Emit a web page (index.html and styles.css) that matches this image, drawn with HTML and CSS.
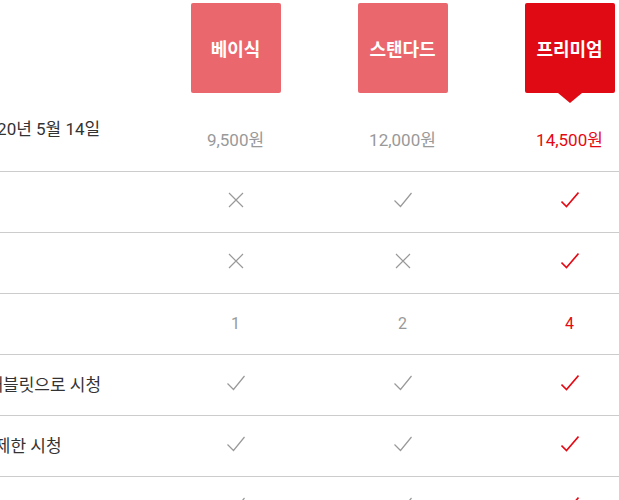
FILE: index.html
```html
<!DOCTYPE html>
<html lang="ko">
<head>
<meta charset="utf-8">
<title>요금제</title>
<link rel="stylesheet" href="styles.css">
</head>
<body>
<div class="plans">
  <div class="row head">
    <div class="label"></div>
    <div class="cell"><div class="box">베이식</div></div>
    <div class="cell"><div class="box">스탠다드</div></div>
    <div class="cell"><div class="box selected">프리미엄</div></div>
  </div>
  <div class="row price">
    <div class="label">첫 달 무료이용 종료 2020년 5월 14일</div>
    <div class="cell">9,500원</div>
    <div class="cell">12,000원</div>
    <div class="cell on">14,500원</div>
  </div>
  <div class="row feature">
    <div class="label">HD 화질 지원</div>
    <div class="cell"><svg class="icon" viewBox="0 0 18 16"><path d="M2 1 L16 15 M16 1 L2 15"/></svg></div>
    <div class="cell"><svg class="icon" viewBox="0 0 18 16"><path d="M0.5 8.5 L6.5 14.5 L17.5 1"/></svg></div>
    <div class="cell on"><svg class="icon" viewBox="0 0 18 16"><path d="M0.5 9.5 L5.5 14.5 L17.5 0.5"/></svg></div>
  </div>
  <div class="row feature">
    <div class="label">UHD 화질 지원</div>
    <div class="cell"><svg class="icon" viewBox="0 0 18 16"><path d="M2 1 L16 15 M16 1 L2 15"/></svg></div>
    <div class="cell"><svg class="icon" viewBox="0 0 18 16"><path d="M2 1 L16 15 M16 1 L2 15"/></svg></div>
    <div class="cell on"><svg class="icon" viewBox="0 0 18 16"><path d="M0.5 9.5 L5.5 14.5 L17.5 0.5"/></svg></div>
  </div>
  <div class="row feature">
    <div class="label">동시 접속 가능 인원</div>
    <div class="cell num">1</div>
    <div class="cell num">2</div>
    <div class="cell num on">4</div>
  </div>
  <div class="row feature">
    <div class="label">노트북, TV, 스마트폰, 태블릿으로 시청</div>
    <div class="cell"><svg class="icon" viewBox="0 0 18 16"><path d="M0.5 8.5 L6.5 14.5 L17.5 1"/></svg></div>
    <div class="cell"><svg class="icon" viewBox="0 0 18 16"><path d="M0.5 8.5 L6.5 14.5 L17.5 1"/></svg></div>
    <div class="cell on"><svg class="icon" viewBox="0 0 18 16"><path d="M0.5 9.5 L5.5 14.5 L17.5 0.5"/></svg></div>
  </div>
  <div class="row feature">
    <div class="label">영화와 TV 프로그램 무제한 시청</div>
    <div class="cell"><svg class="icon" viewBox="0 0 18 16"><path d="M0.5 8.5 L6.5 14.5 L17.5 1"/></svg></div>
    <div class="cell"><svg class="icon" viewBox="0 0 18 16"><path d="M0.5 8.5 L6.5 14.5 L17.5 1"/></svg></div>
    <div class="cell on"><svg class="icon" viewBox="0 0 18 16"><path d="M0.5 9.5 L5.5 14.5 L17.5 0.5"/></svg></div>
  </div>
  <div class="row feature">
    <div class="label">언제든지 해지 가능</div>
    <div class="cell"><svg class="icon" viewBox="0 0 18 16"><path d="M0.5 8.5 L6.5 14.5 L17.5 1"/></svg></div>
    <div class="cell"><svg class="icon" viewBox="0 0 18 16"><path d="M0.5 8.5 L6.5 14.5 L17.5 1"/></svg></div>
    <div class="cell on"><svg class="icon" viewBox="0 0 18 16"><path d="M0.5 9.5 L5.5 14.5 L17.5 0.5"/></svg></div>
  </div>
</div>
</body>
</html>
```
FILE: styles.css
```css
html, body {
  margin: 0;
  padding: 0;
  overflow: hidden;
  background: #fff;
}
body {
  font-family: Roboto, "Noto Sans CJK KR", sans-serif;
  color: #333;
}
.plans {
  margin-left: -164px;
  width: 817px;
}
.row {
  display: grid;
  grid-template-columns: 316px 167px 167px 167px;
}
.label {
  font-size: 17px;
  line-height: 20px;
  color: #333;
  white-space: nowrap;
  display: flex;
  align-items: center;
}
.cell {
  display: flex;
  justify-content: center;
  align-items: center;
  color: #999;
}
.cell.on {
  color: #e50914;
}
.head {
  padding-top: 3px;
}
.box {
  position: relative;
  width: 90px;
  height: 90px;
  border-radius: 2px;
  background: #ea676d;
  color: #fff;
  font-weight: 700;
  font-size: 18px;
  display: flex;
  align-items: center;
  justify-content: center;
}
.box.selected {
  background: #e00a14;
}
.box.selected::after {
  content: "";
  position: absolute;
  left: 33px;
  top: 90px;
  border-left: 12px solid transparent;
  border-right: 12px solid transparent;
  border-top: 10px solid #e00a14;
}
.price {
  height: 78px;
  border-bottom: 1px solid #cccccc;
}
.price .label {
  align-items: flex-start;
  padding-top: 26px;
}
.price .cell {
  align-items: flex-start;
  padding-top: 37px;
  font-size: 17px;
  line-height: 20px;
}
.feature {
  height: 60px;
  border-bottom: 1px solid #cccccc;
}
.icon {
  width: 18px;
  height: 16px;
  margin-bottom: 4px;
  fill: none;
  stroke: currentColor;
  stroke-width: 1.2;
}
.on .icon {
  stroke-width: 1.6;
}
.num {
  font-size: 16px;
  line-height: 20px;
}
```
